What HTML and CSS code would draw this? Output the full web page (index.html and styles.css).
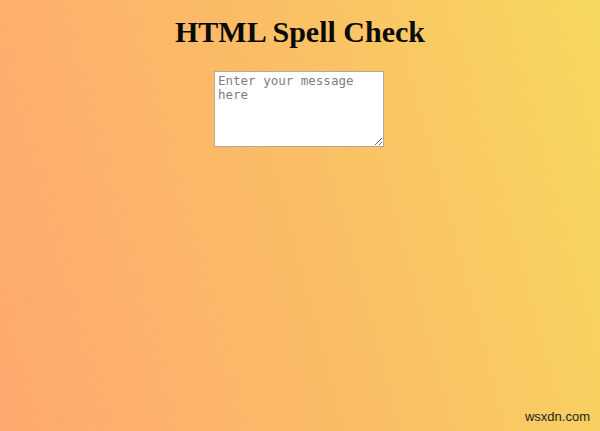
FILE: index.html
```html
<!DOCTYPE html>
<html>
<head>
<meta charset="utf-8">
<link rel="stylesheet" href="styles.css">
</head>
<body>
<div class="page">
  <h1 class="title">HTML Spell Check</h1>
  <textarea class="msg" spellcheck="true" placeholder="Enter your message here"></textarea>
</div>
<div class="mark">wsxdn.com</div>
</body>
</html>
```
FILE: styles.css
```css
html, body {
  margin: 0;
  height: 100%;
}
body {
  background: linear-gradient(75deg, #fea86f 0%, #fbbd66 50%, #f6d85f 100%);
  font-family: "Liberation Serif", serif;
  overflow: hidden;
  position: relative;
}
.page {
  display: flex;
  flex-direction: column;
  align-items: center;
  padding-top: 14px;
}
.title {
  margin: 0 0 21px;
  font-size: 30px;
  font-weight: bold;
  color: #0a0a0a;
  line-height: 36px;
}
.msg {
  box-sizing: border-box;
  width: 170px;
  height: 76px;
  margin: 0 2px 0 0;
  padding: 2px 3px;
  border: 1px solid #b8a89a;
  background: #fff;
  font-family: "DejaVu Sans Mono", monospace;
  font-size: 12.5px;
  line-height: 14px;
  resize: both;
}
.msg::placeholder {
  color: #808080;
}
.mark {
  position: absolute;
  right: 10px;
  bottom: 7px;
  font-family: "Liberation Sans", Arial, sans-serif;
  font-size: 13px;
  color: #222;
}
```
